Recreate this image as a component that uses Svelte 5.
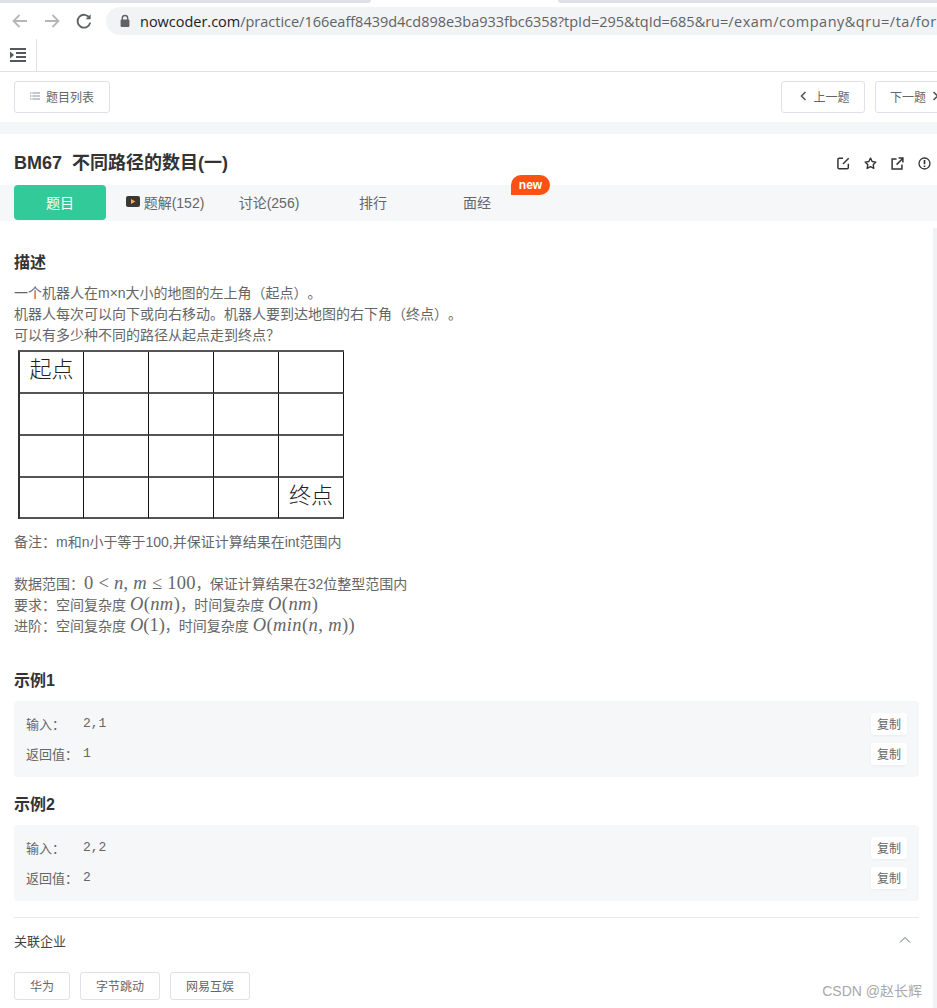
<script>
	const gridCells = Array.from({ length: 20 }, (_, i) => {
		if (i === 0) return '起点';
		if (i === 19) return '终点';
		return '';
	});

	const tabs = ['题解(152)', '讨论(256)', '排行', '面经'];

	const examples = [
		{ title: '示例1', input: '2,1', output: '1' },
		{ title: '示例2', input: '2,2', output: '2' }
	];

	const companies = ['华为', '字节跳动', '网易互娱'];
</script>

<div class="page">
	<!-- browser chrome -->
	<div class="tabstrip">
		<div class="strip-left"></div>
		<div class="strip-gap"></div>
		<div class="strip-right"></div>
	</div>
	<div class="addressbar">
		<svg class="nav-icon" width="20" height="20" viewBox="0 0 20 20" fill="none" stroke="#b4b6b9" stroke-width="1.8">
			<path d="M17 10H4M9.5 4L3.5 10l6 6" />
		</svg>
		<svg class="nav-icon fwd" width="20" height="20" viewBox="0 0 20 20" fill="none" stroke="#b4b6b9" stroke-width="1.8">
			<path d="M3 10h13M10.5 4l6 6-6 6" />
		</svg>
		<svg class="nav-icon reload" width="20" height="20" viewBox="0 0 20 20" fill="none" stroke="#5f6368" stroke-width="1.9">
			<path d="M15.6 7.2A6.4 6.4 0 1 0 16.2 11.6" />
			<path d="M16.6 3.2v5h-5z" fill="#5f6368" stroke="none" />
		</svg>
		<div class="urlpill">
			<svg width="12" height="14" viewBox="0 0 12 14">
				<path d="M3.3 6V4.2a2.7 2.7 0 0 1 5.4 0V6" fill="none" stroke="#5f6368" stroke-width="1.4" />
				<rect x="1.6" y="5.6" width="8.8" height="7.4" rx="1" fill="#5f6368" />
			</svg>
			<span class="url"><span class="host">nowcoder.com</span>/practice/166eaff8439d4cd898e3ba933fbc6358?tpId=295&amp;tqId=685&amp;ru=<span class="url-tail">/exam/company&amp;qru=/ta/for</span></span>
		</div>
	</div>
	<div class="bookmarks">
		<div class="bm-item">
			<svg width="18" height="16" viewBox="0 0 18 16" fill="#55585c">
				<rect x="1" y="1" width="16" height="2" />
				<rect x="7" y="5" width="10" height="2" />
				<rect x="7" y="9" width="10" height="2" />
				<rect x="1" y="13" width="16" height="2" />
				<path d="M1 4.6L5 8l-4 3.4z" />
			</svg>
		</div>
	</div>

	<!-- prev/next bar -->
	<div class="topbar">
		<button class="btn list-btn">
			<svg width="10" height="8" viewBox="0 0 10 8" fill="#8a8f99">
				<rect x="0" y="0.5" width="1.4" height="1" />
				<rect x="2.4" y="0.5" width="7.6" height="1" />
				<rect x="0" y="3.5" width="1.4" height="1" />
				<rect x="2.4" y="3.5" width="7.6" height="1" />
				<rect x="0" y="6.5" width="1.4" height="1" />
				<rect x="2.4" y="6.5" width="7.6" height="1" />
			</svg>
			题目列表
		</button>
		<div class="pager">
			<button class="btn prev">
				<svg width="7" height="10" viewBox="0 0 7 10" fill="none" stroke="#55585c" stroke-width="1.6"><path d="M5.5 1L1.5 5l4 4" /></svg>
				上一题
			</button>
			<button class="btn next">
				下一题
				<svg width="7" height="10" viewBox="0 0 7 10" fill="none" stroke="#55585c" stroke-width="1.6"><path d="M1.5 1l4 4-4 4" /></svg>
			</button>
		</div>
	</div>
	<div class="band"></div>

	<!-- title -->
	<div class="title-row">
		<h1>BM67&nbsp;&nbsp;不同路径的数目(一)</h1>
		<div class="actions">
			<svg width="13" height="13" viewBox="0 0 14 14" fill="none" stroke="#333" stroke-width="1.6">
				<path d="M6.5 1.4H2.4a1.4 1.4 0 0 0-1.4 1.4v8.4a1.4 1.4 0 0 0 1.4 1.4h8.4a1.4 1.4 0 0 0 1.4-1.4V7.4" />
				<path d="M12.6 1.4L6.4 7.6" />
			</svg>
			<svg width="13" height="13" viewBox="0 0 14 14" fill="none" stroke="#333" stroke-width="1.5">
				<path d="M7 1.2l1.8 3.7 4 .6-2.9 2.8.7 4L7 10.4l-3.6 1.9.7-4L1.2 5.5l4-.6z" stroke-linejoin="round" />
			</svg>
			<svg width="13" height="13" viewBox="0 0 14 14" fill="none" stroke="#333" stroke-width="1.6">
				<path d="M6 2.2H1.2v10.6h10.6V8.2" />
				<path d="M6 8.2L12.4 1.8M8.2 1.2h4.6v4.6" />
			</svg>
			<svg width="13" height="13" viewBox="0 0 14 14" fill="none" stroke="#333" stroke-width="1.4">
				<circle cx="7" cy="7" r="5.9" />
				<path d="M7 3.2v4.6" stroke-width="1.8" />
				<path d="M7 9.2v1.6" stroke-width="1.8" />
			</svg>
		</div>
	</div>

	<!-- tabs -->
	<div class="tabs">
		<div class="tab active">题目</div>
		{#each tabs as tab, i}
			<div class="tab">
				{#if i === 0}
					<svg class="video" width="14" height="11" viewBox="0 0 14 11">
						<rect width="14" height="11" rx="2" fill="#3b3733" />
						<path d="M5 3l4.4 2.5L5 8z" fill="#f2b544" />
					</svg>
				{/if}
				{tab}
			</div>
		{/each}
		<span class="new-badge">new</span>
	</div>

	<!-- content -->
	<div class="content">
		<h2 class="desc-title">描述</h2>
		<div class="desc">
			<p>一个机器人在m×n大小的地图的左上角（起点）。</p>
			<p>机器人每次可以向下或向右移动。机器人要到达地图的右下角（终点）。</p>
			<p>可以有多少种不同的路径从起点走到终点？</p>
		</div>
		<div class="map">
			{#each gridCells as cell}
				<div class="cell">{cell}</div>
			{/each}
		</div>
		<div class="notes">
			<p>备注：m和n小于等于100,并保证计算结果在int范围内</p>
			<p>&nbsp;</p>
			<p>数据范围：<span class="math range">0 &lt; <i>n</i>, <i>m</i> ≤ 100</span>，保证计算结果在32位整型范围内</p>
			<p>要求：空间复杂度 <span class="math wide"><i>O</i>(<i>nm</i>)</span>，时间复杂度 <span class="math wide"><i>O</i>(<i>nm</i>)</span></p>
			<p>进阶：空间复杂度 <span class="math"><i>O</i>(1)</span>，时间复杂度 <span class="math wide"><i>O</i>(<i>min</i>(<i>n</i>, <i>m</i>))</span></p>
		</div>

		{#each examples as ex}
			<h3>{ex.title}</h3>
			<div class="example">
				<div class="ex-row">
					<span class="ex-label">输入：</span>
					<code>{ex.input}</code>
					<button class="copy">复制</button>
				</div>
				<div class="ex-row">
					<span class="ex-label">返回值：</span>
					<code>{ex.output}</code>
					<button class="copy">复制</button>
				</div>
			</div>
		{/each}

		<div class="related">
			<div class="related-head">
				<span>关联企业</span>
				<svg width="12" height="8" viewBox="0 0 12 8" fill="none" stroke="#5f6f80" stroke-width="1"><path d="M1 6.5l5-5 5 5" /></svg>
			</div>
			<div class="company-list">
				{#each companies as c}
					<span class="company">{c}</span>
				{/each}
			</div>
		</div>
	</div>

	<div class="scrollbar"></div>
	<div class="watermark">CSDN @赵长辉</div>
</div>

<style>
	:global(body) {
		margin: 0;
		background: #fff;
	}

	.page {
		position: relative;
		width: 937px;
		height: 1008px;
		overflow: hidden;
		font-family: 'Liberation Sans', 'Noto Sans CJK SC', sans-serif;
		text-spacing-trim: space-all;
		color: #333;
		background: #fff;
	}

	p {
		margin: 0;
	}

	button {
		font-family: inherit;
	}

	/* chrome */
	.tabstrip {
		display: flex;
		height: 3px;
	}

	.strip-left {
		width: 371px;
		background: #dee1e6;
		border-bottom-right-radius: 4px;
	}

	.strip-gap {
		width: 187px;
	}

	.strip-right {
		flex: 1;
		background: #dee1e6;
		border-bottom-left-radius: 4px;
	}

	.addressbar {
		display: flex;
		align-items: center;
		height: 36px;
		padding-left: 10px;
	}

	.nav-icon {
		flex: none;
	}

	.nav-icon.fwd,
	.nav-icon.reload {
		margin-left: 12px;
	}

	.urlpill {
		display: flex;
		align-items: center;
		gap: 9px;
		flex: none;
		width: 900px;
		height: 28px;
		margin-left: 12px;
		padding-left: 13px;
		background: #f1f3f4;
		border-radius: 14px;
		white-space: nowrap;
	}

	.url {
		font-family: 'Open Sans', sans-serif;
		font-size: 14.5px;
		letter-spacing: -0.015px;
		color: #5f6368;
	}

	.host {
		color: #202124;
	}

	.url-tail {
		letter-spacing: 0.5px;
	}

	.bookmarks {
		height: 32px;
		border-bottom: 1px solid #e0e0e0;
	}

	.bm-item {
		display: flex;
		align-items: center;
		justify-content: center;
		width: 37px;
		height: 32px;
		box-sizing: border-box;
		border-right: 1px solid #e0e0e0;
	}

	.topbar {
		display: flex;
		justify-content: space-between;
		height: 50px;
		box-sizing: border-box;
		padding: 9px 0 0 14px;
	}

	.btn {
		display: flex;
		align-items: center;
		justify-content: center;
		gap: 6px;
		height: 32px;
		padding: 0 0 2px;
		font-size: 12px;
		color: #666;
		background: #fff;
		border: 1px solid #dfe1e8;
		border-radius: 3px;
	}

	.list-btn {
		width: 96px;
	}

	.pager {
		display: flex;
		gap: 10px;
		margin-right: -22px;
	}

	.prev {
		width: 84px;
		padding-left: 4px;
	}

	.next {
		width: 84px;
		justify-content: flex-start;
		padding-left: 14px;
	}

	.band {
		height: 12px;
		background: #f5f6f8;
	}

	/* title */
	.title-row {
		display: flex;
		justify-content: space-between;
		align-items: center;
		height: 51px;
		padding: 8px 6px 5px 14px;
		box-sizing: border-box;
	}

	h1 {
		margin: 0;
		font-size: 18px;
		font-weight: 700;
		color: #333;
	}

	.actions {
		display: flex;
		gap: 14px;
		margin-top: 4px;
	}

	.tabs {
		position: relative;
		display: flex;
		height: 36px;
		padding-left: 14px;
		background: #f6f7f9;
	}

	.tab {
		display: flex;
		align-items: center;
		justify-content: center;
		gap: 4px;
		width: 104px;
		height: 35px;
		box-sizing: border-box;
		padding-bottom: 2px;
		font-size: 14px;
		color: #666;
	}

	.tab.active {
		width: 92px;
		margin-right: 7px;
		color: #fff;
		background: #32ca99;
		border-radius: 4px;
	}

	.video {
		flex: none;
	}

	.new-badge {
		position: absolute;
		left: 511px;
		top: -10px;
		display: flex;
		align-items: center;
		justify-content: center;
		width: 39px;
		height: 20px;
		font-size: 12px;
		font-weight: 700;
		color: #fff;
		background: #ff5113;
		border-radius: 10px 10px 10px 0;
	}

	/* content */
	.content {
		padding: 0 18px 0 14px;
	}

	.desc-title {
		margin: 31px 0 9px;
		font-size: 16px;
		line-height: 22px;
		font-weight: 700;
		color: #333;
	}

	.desc {
		font-size: 14px;
		line-height: 21px;
		color: #666;
	}

	.map {
		display: grid;
		grid-template-columns: 64px repeat(4, 65px);
		grid-template-rows: repeat(3, 42px) 41px;
		width: 326px;
		box-sizing: border-box;
		margin: 4px 0 0 4px;
		border-top: 2px solid #555;
		border-left: 2px solid #333;
	}

	.cell {
		box-sizing: border-box;
		display: flex;
		align-items: center;
		justify-content: center;
		padding-bottom: 10px;
		font-size: 22px;
		font-weight: 300;
		color: #222;
		border-right: 1px solid #111;
		border-bottom: 2px solid #555;
	}

	.notes {
		margin: 13px 0 33px;
		font-size: 14px;
		line-height: 21px;
		color: #666;
	}

	.notes p {
		height: 21px;
	}

	.math {
		font-family: 'Liberation Serif', serif;
		font-size: 18.5px;
		line-height: 1;
		color: #666;
	}

	.math.wide {
		letter-spacing: 0.4px;
	}

	.math.range {
		letter-spacing: 0.27px;
	}

	h3 {
		margin: 0 0 9px;
		font-size: 16px;
		line-height: 22px;
		font-weight: 700;
		color: #333;
	}

	.example {
		display: flex;
		flex-direction: column;
		gap: 8px;
		height: 76px;
		box-sizing: border-box;
		margin-bottom: 17px;
		padding: 12px 12px 0;
		background: #f6f7f9;
		border-radius: 4px;
	}

	.ex-row {
		display: flex;
		align-items: center;
		height: 22px;
		font-size: 13px;
		color: #666;
	}

	.ex-label {
		width: 57px;
		flex: none;
		padding-bottom: 2px;
	}

	code {
		flex: 1;
		padding-bottom: 2px;
		font-family: 'Liberation Mono', monospace;
		font-size: 13px;
		color: #666;
	}

	.copy {
		width: 36px;
		height: 22px;
		padding: 0 0 1px;
		font-size: 12px;
		color: #666;
		background: #fff;
		border: 0;
		border-radius: 3px;
		box-shadow: 0 1px 3px rgba(0, 0, 0, 0.05);
	}

	.related {
		margin-top: -1px;
		border-top: 1px solid #e8e9ed;
	}

	.related-head {
		display: flex;
		justify-content: space-between;
		align-items: center;
		height: 47px;
		box-sizing: border-box;
		padding: 0 8px 3px 0;
		font-size: 13px;
		color: #444;
	}

	.company-list {
		display: flex;
		gap: 10px;
		margin-top: 7px;
	}

	.company {
		display: flex;
		align-items: center;
		justify-content: center;
		height: 24px;
		padding: 0 15px 2px;
		font-size: 12px;
		color: #666;
		border: 1px solid #dfe1e8;
		border-radius: 3px;
	}

	.scrollbar {
		position: absolute;
		right: 0;
		top: 228px;
		bottom: 0;
		width: 4px;
		background: #f1f2f4;
	}

	.watermark {
		position: absolute;
		right: 15px;
		bottom: 8px;
		font-size: 14px;
		color: #a8a8a8;
	}
</style>
